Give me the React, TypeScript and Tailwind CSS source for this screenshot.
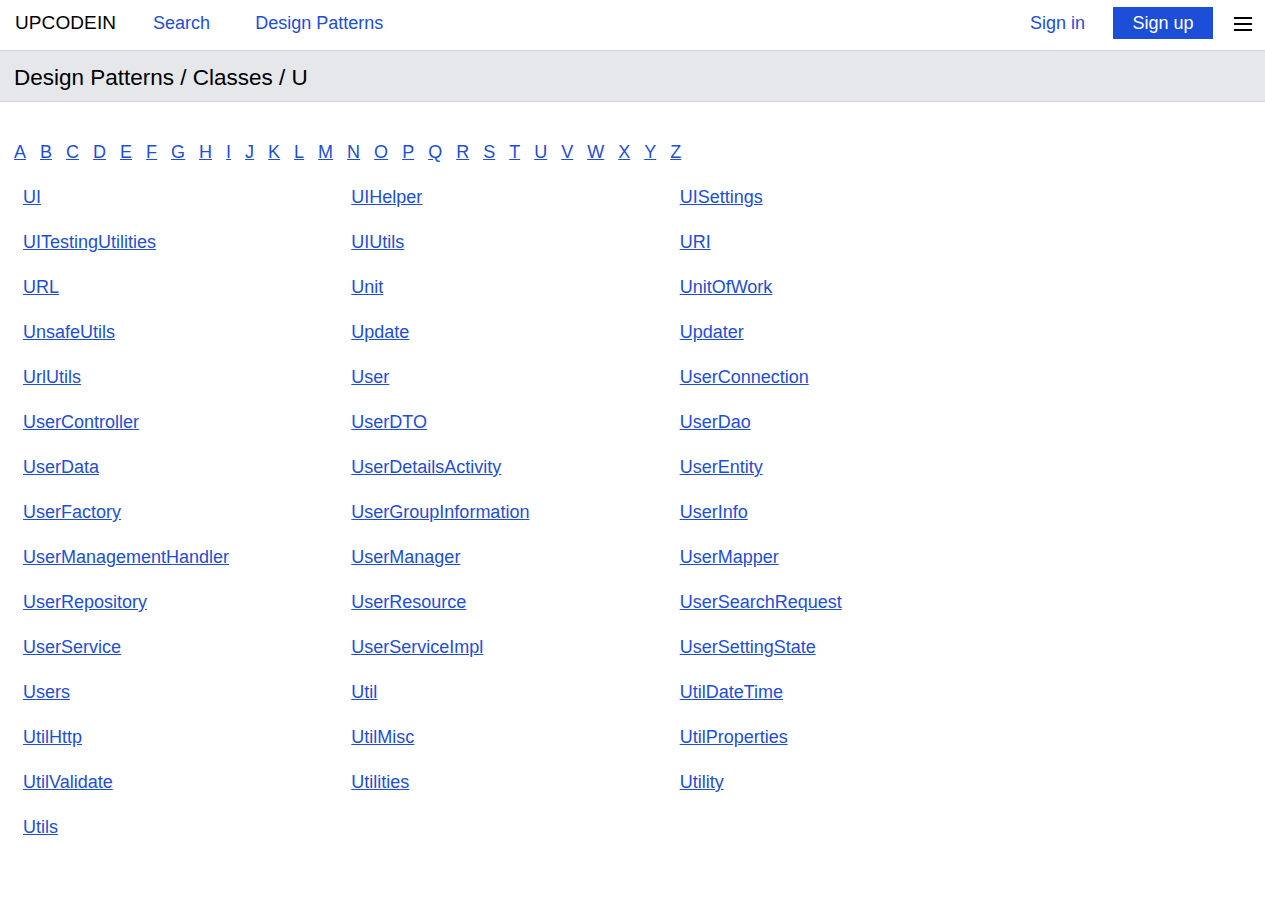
import React from 'react';

const letters = 'ABCDEFGHIJKLMNOPQRSTUVWXYZ'.split('');

const classes = [
  'UI', 'UIHelper', 'UISettings',
  'UITestingUtilities', 'UIUtils', 'URI',
  'URL', 'Unit', 'UnitOfWork',
  'UnsafeUtils', 'Update', 'Updater',
  'UrlUtils', 'User', 'UserConnection',
  'UserController', 'UserDTO', 'UserDao',
  'UserData', 'UserDetailsActivity', 'UserEntity',
  'UserFactory', 'UserGroupInformation', 'UserInfo',
  'UserManagementHandler', 'UserManager', 'UserMapper',
  'UserRepository', 'UserResource', 'UserSearchRequest',
  'UserService', 'UserServiceImpl', 'UserSettingState',
  'Users', 'Util', 'UtilDateTime',
  'UtilHttp', 'UtilMisc', 'UtilProperties',
  'UtilValidate', 'Utilities', 'Utility',
  'Utils',
];

const App: React.FC = () => {
  return (
    <div className="min-h-screen bg-white text-black font-['Liberation_Sans',Arial,sans-serif]">
      {/* Header */}
      <header className="h-[51px] flex items-center border-b border-gray-300 pl-[15px] pr-[13px] pb-[3px]">
        <span className="text-[19px] tracking-[0.1px] text-black">UPCODEIN</span>
        <a href="#" className="ml-[37px] text-[18px] text-[#1d4ed8]">Search</a>
        <a href="#" className="ml-[45px] text-[18px] text-[#1d4ed8]">Design Patterns</a>
        <div className="ml-auto flex items-center">
          <a href="#" className="text-[18px] text-[#1d4ed8]">Sign in</a>
          <button className="ml-[28px] w-[100px] h-[32px] -mt-[1px] bg-[#1d4ed8] text-white text-[18px]">Sign up</button>
          <button className="ml-[21px] w-[18px] flex flex-col gap-[4px]">
            <span className="block h-[2px] bg-black"></span>
            <span className="block h-[2px] bg-black"></span>
            <span className="block h-[2px] bg-black"></span>
          </button>
        </div>
      </header>

      {/* Breadcrumb */}
      <div className="h-[51px] flex items-center px-[14px] pt-[3px] bg-gray-200 border-b border-gray-300">
        <h1 className="text-[22.5px] text-black">Design Patterns / Classes / U</h1>
      </div>

      {/* Letters */}
      <div className="px-[14px] mt-[38px] flex gap-[14px] text-[18px] leading-[24px]">
        {letters.map(l => (
          <a key={l} href="#" className="text-[#1d4ed8] underline">{l}</a>
        ))}
      </div>

      {/* Class list */}
      <div className="ml-[23px] mt-[11px] w-[985px] grid grid-cols-3">
        {classes.map(c => (
          <div key={c} className="h-[45px] flex items-center">
            <a href="#" className="text-[18px] text-[#1d4ed8] underline">{c}</a>
          </div>
        ))}
      </div>
    </div>
  );
};

export default App;
